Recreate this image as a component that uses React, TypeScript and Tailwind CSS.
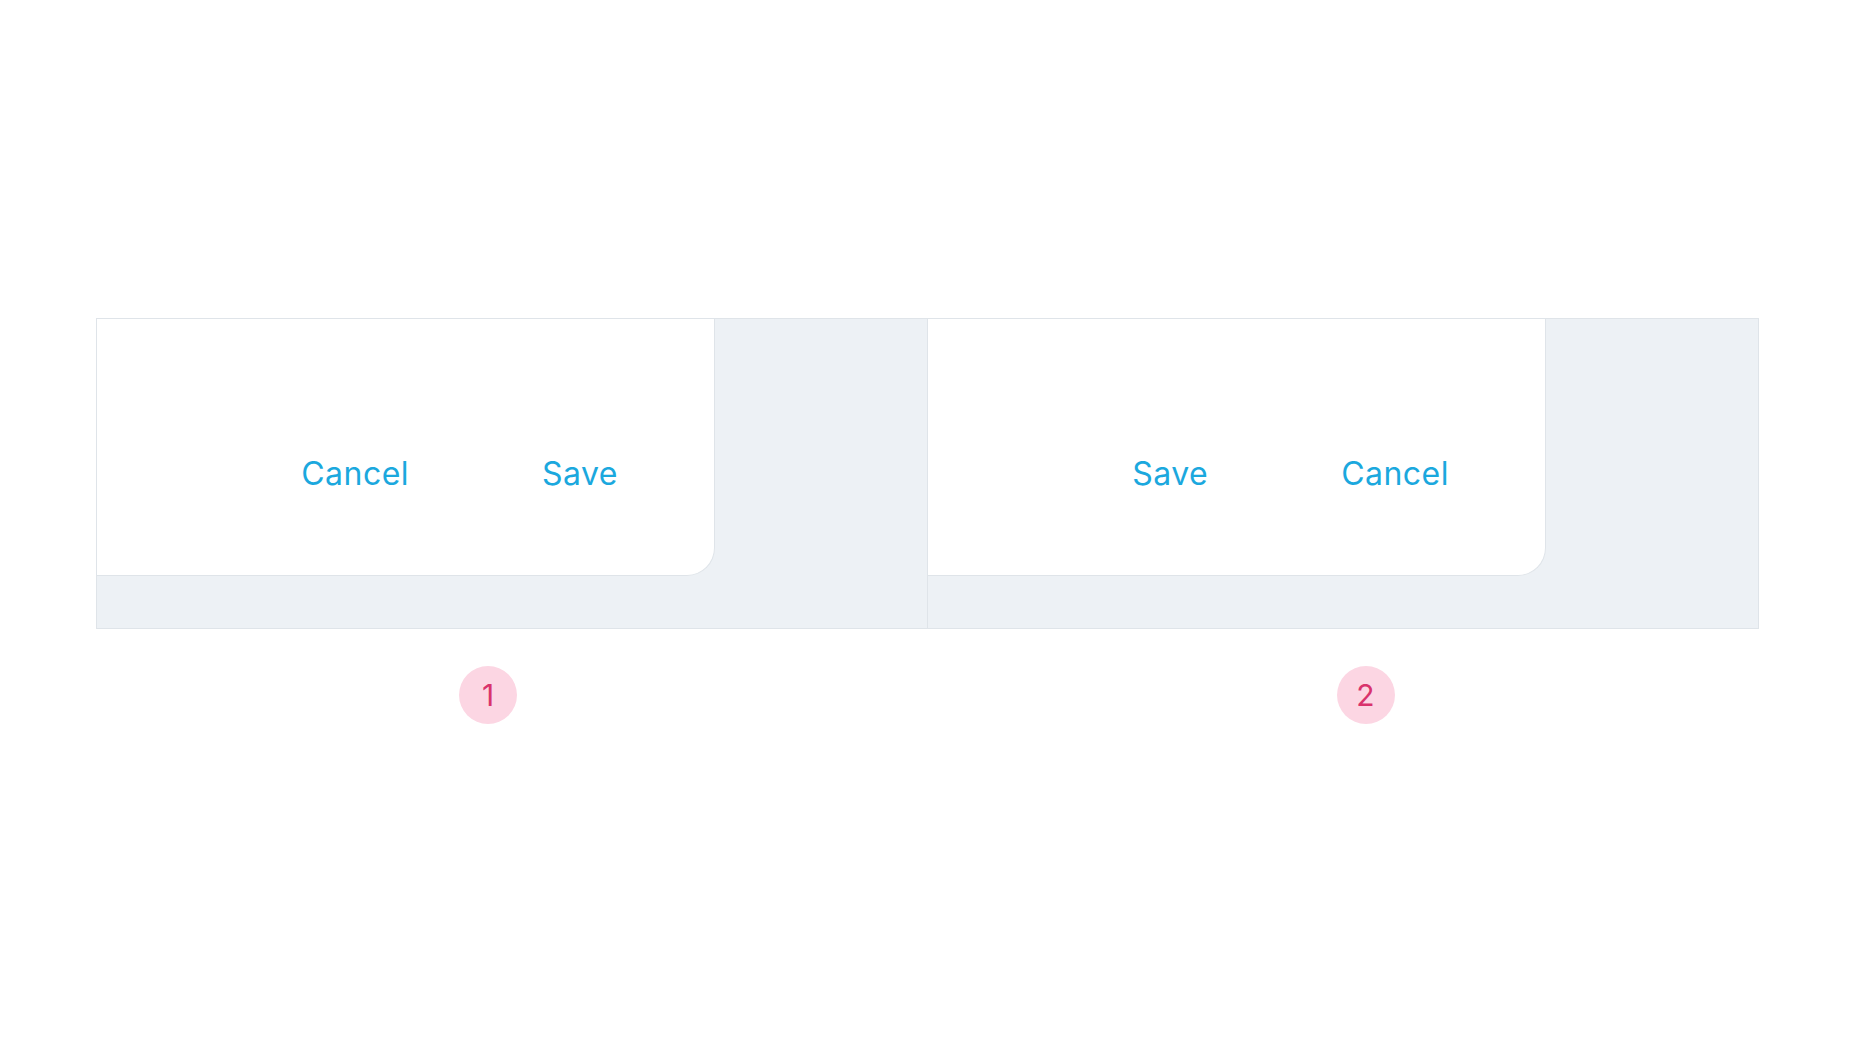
const panels = [
    { buttons: ["Cancel", "Save"], badge: "1", badgeOffset: "ml-[363px]" },
    { buttons: ["Save", "Cancel"], badge: "2", badgeOffset: "ml-[409px]" },
];

const App = () => {
    return (
        <main className="min-h-screen w-full bg-white pt-[318px] pl-[96px]" style={{ fontFamily: "Inter, 'Liberation Sans', sans-serif" }}>
            <div className="flex w-[1663px] h-[311px] border border-[#dfe4e9] bg-[#edf1f5]">
                {panels.map((panel, i) => (
                    <div key={panel.badge} className={`flex-1 ${i > 0 ? "border-l border-[#dfe4e9]" : ""}`}>
                        <div className="w-[618px] h-[257px] bg-white border-r border-b border-[#dfe4e9] rounded-br-[28px] flex items-center justify-end gap-[133px] pr-[96px] pt-[53px]">
                            {panel.buttons.map((label) => (
                                <button key={label} className="text-[32px] leading-none text-[#1ba8de] tracking-[0.015em]">
                                    {label}
                                </button>
                            ))}
                        </div>
                    </div>
                ))}
            </div>
            <div className="flex w-[1663px] mt-[37px]">
                {panels.map((panel) => (
                    <div key={panel.badge} className="flex-1">
                        <div className={`${panel.badgeOffset} w-[58px] h-[58px] rounded-full bg-[#fcd6e3] flex items-center justify-center text-[30px] text-[#d9336c]`}>
                            {panel.badge}
                        </div>
                    </div>
                ))}
            </div>
        </main>
    );
};

export default App;
